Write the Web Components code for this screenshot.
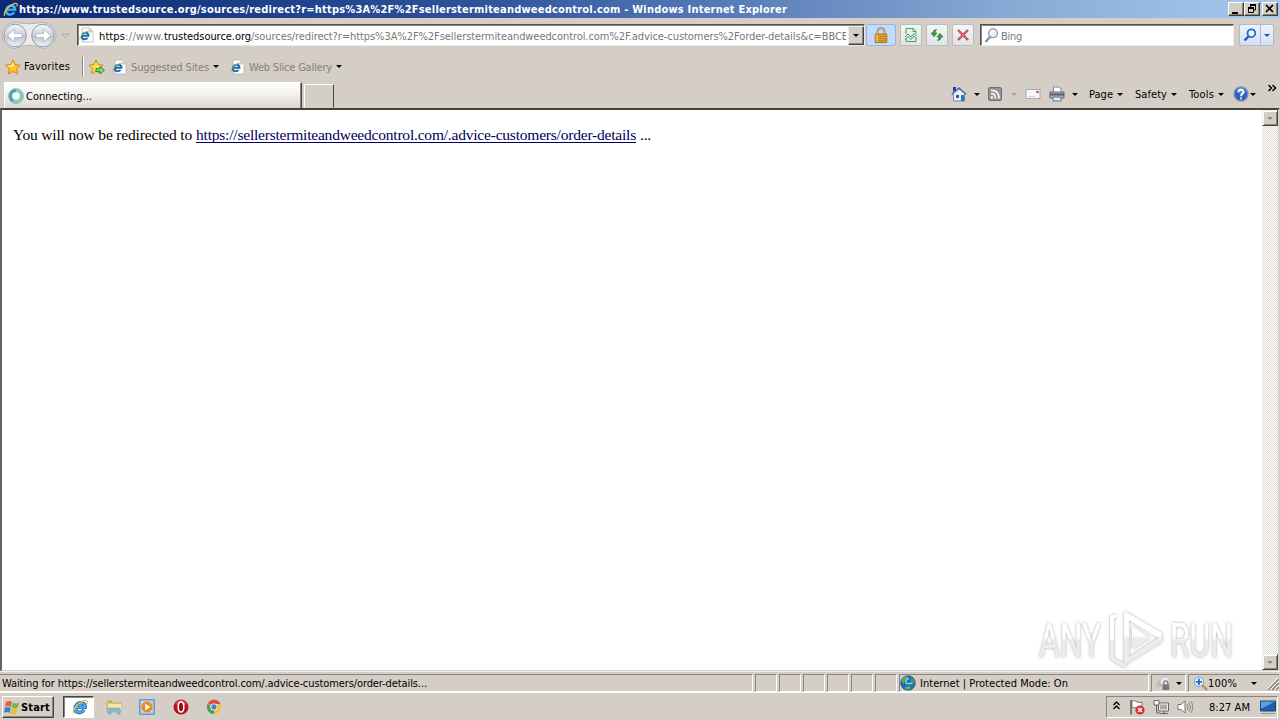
<!DOCTYPE html>
<html lang="en">
<head>
<meta charset="utf-8">
<title>Windows Internet Explorer</title>
<style>
    body {
        margin: 0;
        width: 1280px;
        height: 720px;
        overflow: hidden;
        font: 11px/14px "DejaVu Sans Condensed", "DejaVu Sans", sans-serif;
        color: #000;
        background: #d5cec7;
    }
</style>
</head>
<body>
<browser-window>
    <title-bar slot="title">https://www.trustedsource.org/sources/redirect?r=https%3A%2F%2Fsellerstermiteandweedcontrol.com - Windows Internet Explorer</title-bar>
    <address-row slot="address"></address-row>
    <favorites-bar slot="favorites"></favorites-bar>
    <tab-row slot="tabs"></tab-row>
    <page-view slot="page"></page-view>
    <status-bar slot="status"></status-bar>
</browser-window>
<task-bar></task-bar>

<script>
const ICONS = {
    ie: `<path d="M3 1h8l3 3v11H3z" fill="#fff" stroke="#aeb6bd" stroke-width=".8"/><path d="M11 1v3h3" fill="#e5e9ec" stroke="#aeb6bd" stroke-width=".7"/>
        <g transform="translate(-.5 2.2) skewX(-8) translate(1.5 0)"><path d="M8.8 8.7A3.3 3.3 0 1 1 9.4 6.5H3" fill="none" stroke="#176cb4" stroke-width="2"/></g><path d="M1 12.5C-.3 10 6 4.3 10.7 3.7c1.5 0 1.1 1.6.6 2.3" fill="none" stroke="#c9ac45" stroke-width="1"/>`,
    e: `<g transform="skewX(-8) translate(1 0)"><path d="M12.6 10.8A4.8 4.8 0 1 1 13.1 8.3H4" fill="none" stroke="#104a99" stroke-width="3.6"/><path d="M12.6 10.8A4.8 4.8 0 1 1 13.1 8.3H4" fill="none" stroke="#41b4ee" stroke-width="2.3"/></g>
        <path d="M2.2 14.6C-1.5 12.5 7.5 2.1 13.7 1.4c2.2-.1 1.8 2.3 1 3.4" fill="none" stroke="#edc240" stroke-width="1.3"/>`,
    star: `<path d="M8 .8l2.2 4.8 5.2.6-3.8 3.6 1 5.2L8 12.5 3.4 15l1-5.2L.6 6.2l5.2-.6z" fill="#ffc42c" stroke="#d58a12"/><path d="M8 3l1.5 3.5-3 2-3.8-1.8L6.3 6z" fill="#ffea8e"/>`,
    addstar: `<path d="M7 .8l2.1 4.7 5 .6-3.7 3.4 1 4.8L7 12l-4.4 2.5 1-5L.3 6.1l4.6-.6z" fill="#ffdb55" stroke="#cf8a17"/><path d="M7 9.7h4V7.5l4.5 3.7-4.5 3.7v-2.3H7z" fill="#7ddb70" stroke="#21822a" stroke-width=".9"/>`,
    lock: `<path d="M4.5 8V4.8a3.5 3.5 0 0 1 7 0V8" fill="none" stroke="#857553" stroke-width="2"/><path d="M4.5 8V4.8a3.5 3.5 0 0 1 7 0V8" fill="none" stroke="#e4d6aa" stroke-width=".8"/>
        <path d="M2.2 7h11.6v8.5H2.2z" fill="#e8a72b" stroke="#a9731b"/><path d="M3 9.4h10M3 11.6h10M3 13.7h10" stroke="#ba7d1c"/><path d="M4 7.7v7" stroke="#ffe07a"/>`,
    compat: `<path d="M3 7V1.5h7.2L13 4.3V7M3 11v3.5h10V11" fill="none" stroke="#50a057"/><path d="M10 1.5v3h3" fill="none" stroke="#50a057"/><path d="M2 10l3-3 3 3 3-3.5 3 3M2 12.5l3-3 3 3 3-3.5 3 3" fill="none" stroke="#329344" stroke-width=".9"/>`,
    refresh: `<path d="M7.5 2.5Q4.2 2.500 4 6H2l3 3.700L8 6H6Q6 4 7.500 2.500z" fill="#3c9c43" stroke="#257c30" stroke-width=".7"/><path d="M8.500 13.500Q12 13.500 12.200 10H14l-3-3.700L8 10h2Q10 12 8.500 13.500z" fill="#3c9c43" stroke="#257c30" stroke-width=".7"/>`,
    stop: `<path d="M3 3l10 10M13 3L3 13" stroke="#b94052" stroke-width="2.3"/><path d="M3.5 3.5l9 9M12.5 3.5l-9 9" stroke="#e8707a" stroke-width="1"/>`,
    glass: `<path d="M6.6 9.4L1.5 15" stroke="#7d8b9c" stroke-width="2.3"/><circle cx="9.6" cy="5.7" r="4.7" fill="#e3f1fb" stroke="#8998aa" stroke-width="1.3"/><path d="M7 5q1-2 3-2" stroke="#fff" stroke-width="1.4" fill="none"/>`,
    find: `<path d="M7 9L2.5 13.5" stroke="#2159bf" stroke-width="2.4"/><circle cx="9.4" cy="6.2" r="3.9" fill="#e8f5ff" stroke="#276ad0" stroke-width="1.8"/>`,
    home: `<path d="M2.5 7v8h11V7L8 3z" fill="#e8f0fc" stroke="#7189b5"/><path d="M.7 8.5L8 2l7.3 6.5" stroke="#5168a9" fill="none" stroke-width="1.4"/><path d="M2 1h3v3L2 6z" fill="#263da2"/><path d="M10 9h3v6h-3z" fill="#287cad"/><path d="M5 9h3v3H5z" fill="#46566e"/>`,
    rss: `<rect x="1.5" y="1.5" width="13" height="13" rx="1.5" fill="#949494" stroke="#727272"/><path d="M4 7.5q4.5 0 4.5 5M4 4.2q8 0 8 8.3" stroke="#fff" stroke-width="1.5" fill="none"/><circle cx="4.9" cy="11.5" r="1.2" fill="#fff"/>`,
    mail: `<path d="M1 3.5h14v9H1z" fill="#f7f7fa" stroke="#aaa8ad"/><path d="M11 5h3v2h-3z" fill="#d86a68"/><path d="M3 10.5h7" stroke="#cdd2de"/>`,
    print: `<path d="M4.5 6V1h5.7L12 3v3" fill="#fff" stroke="#7c8693"/><path d="M1 6h14v6H1z" fill="#b3b6ba" stroke="#646b72"/><path d="M1 8.5h14" stroke="#555d66" stroke-width="2"/><path d="M4 11h8v4H4z" fill="#b9e0f2" stroke="#6e7880"/><path d="M5 13h6" stroke="#fff"/>`,
    help: `<circle cx="8" cy="8" r="7" fill="#2e60c2" stroke="#8291b1" stroke-width="1.4"/><path d="M3 6q4-6 10 0-4 3-10 0" fill="#688fde"/><path d="M5.5 6q0-2.5 2.5-2.5T10.5 6q0 1.2-1.2 1.9T8 10.3M8 11.5v1.7" fill="none" stroke="#fff" stroke-width="1.8"/>`,
    spin: `<circle cx="8" cy="8" r="5.6" fill="#fff" stroke="#8fd3cb" stroke-width="3"/><path d="M8 2.4a5.6 5.6 0 0 0-3 10.3" fill="none" stroke="#4aaca2" stroke-width="3"/><circle cx="8" cy="8" r="7.2" fill="none" stroke="#4a9f98" stroke-width=".8"/><circle cx="8" cy="8" r="4.1" fill="none" stroke="#5fa9a3" stroke-width=".6"/>`,
    globe: `<circle cx="8" cy="8" r="7.3" fill="#2368bd" stroke="#254f83" stroke-width=".7"/><path d="M1.5 6q1-4 5-5l2 1-2 2 1 1-3 1-1 3zM5 12l3-1 3 1-1 2-4 1z" fill="#55b64b"/><path d="M11 2.500q3 1 3.700 5l-2 3-2-2z" fill="#3f9f62"/><path d="M6 8.500q-1-4 3-5M6 8.500h6" stroke="#8fd0ef" stroke-width="1.4" fill="none"/>`,
    secure: `<path d="M1 10q0-3 3-5l4-3 3 3-2 6-7 1z" fill="#bcbcbc"/><circle cx="10" cy="6.5" r="4.5" fill="#ececec" stroke="#c5c5c5"/><path d="M8.8 9.5V7.8a2 2 0 0 1 4 0v1.7" fill="none" stroke="#777" stroke-width="1.3"/><path d="M7.5 9.3h6.7V15H7.5z" fill="#777"/>`,
    zoom: `<path d="M9.5 9.5L15 15" stroke="#bd9152" stroke-width="2.6"/><circle cx="6.3" cy="6.3" r="5" fill="#eaf6ff" stroke="#8ba9c4" stroke-width="1.2"/><path d="M6.3 3v6.6M3 6.3h6.6" stroke="#2369ce" stroke-width="2"/>`,
    win: `<path d="M2 3q3-2 6 0L7 8Q4 6 1 8z" fill="#e6603a"/><path d="M9 3.4q3 2 6.2 0l-1.5 5q-3 2-5.7.2z" fill="#73b944"/><path d="M.8 9q3-2 6 0l-1.3 5q-2.7-1.7-5.4-.2z" fill="#3780d2"/><path d="M7.6 9.5q3 1.8 5.9.2l-1.4 5q-3 1.7-5.8-.2z" fill="#f2bc32"/>`,
    folder: `<path d="M1 2h5l1 2h8v9H1z" fill="#e9c862" stroke="#bfa458" stroke-width=".7"/><path d="M2 5h13v6H2z" fill="#f8e7a0"/><path d="M2 9h12v6h-3v-3H5v3H2z" fill="#80bbd9" stroke="#6caac9" stroke-width=".6"/><path d="M3 3h3" stroke="#5aab4d"/>`,
    media: `<path d="M.7.7h14.6v14.6H.7z" fill="#9ac8ea" stroke="#6289b2"/><path d="M2.5 2.5h11v11h-11z" fill="#c6e2f5"/><circle cx="8" cy="8" r="5.6" fill="#f28a17"/><path d="M6.2 4.7v6.6L11.4 8z" fill="#fff"/>`,
    opera: `<circle cx="8" cy="8" r="7.5" fill="#b9111c"/><path d="M2 5q6-8 12 0-5 3-12 0" fill="#d94b50"/><ellipse cx="8" cy="8" rx="2.8" ry="5" fill="#8f0f18" stroke="#fff" stroke-width="1.5"/>`,
    chrome: `<circle cx="8" cy="8" r="7" fill="#efc52d"/><path d="M8 8L2 4.3A7 7 0 0 1 14.5 5H8z" fill="#df4c3c"/><path d="M8 8v7A7 7 0 0 1 2 4.3L6 10z" fill="#3ca257"/><circle cx="8" cy="8" r="3.6" fill="#fff"/><circle cx="8" cy="8" r="2.7" fill="#427fde"/>`,
    flag: `<path d="M2 1v14.5" stroke="#777" stroke-width="2"/><path d="M3 2q3-1 5 1 3 1 5 0v7q-3 1-5-1-2-1-5 0z" fill="#fff" stroke="#777"/><circle cx="11" cy="11" r="4.6" fill="#d82d32"/><path d="M9 9l4 4M13 9l-4 4" stroke="#fff" stroke-width="1.5"/>`,
    net: `<path d="M5.5 4h10v8h-10z" fill="#aaa" stroke="#666"/><path d="M6.5 5h8v6h-8z" fill="none" stroke="#fff" stroke-width=".8"/><path d="M7 14.5h8M11 12v3" stroke="#666" stroke-width="1.2"/><path d="M1 1.5h5V6H1z" fill="#fff" stroke="#666"/><path d="M3.5 6v8H7" fill="none" stroke="#666"/>`,
    sound: `<path d="M1 5.5h3L8 2v12l-4-3.5H1z" fill="#fff" stroke="#777"/><path d="M10 5q2 3 0 6M12 3.5q3 4.5 0 9M14 2q3.5 6 0 12" fill="none" stroke="#8b8b8b"/>`,
    desk: `<path d="M.5 2h15v10H.5z" fill="#1b5fb2" stroke="#23466e"/><path d="M1 2.5h14L3 9H1z" fill="#5b9ee2"/><path d="M1 14.5h14" stroke="#8998aa"/>`
};

class UiIcon extends HTMLElement {
    constructor() {
        super();
        this.attachShadow({ mode: "open" });
    }

    connectedCallback() {
        const size = this.getAttribute("size") || 16;
        this.shadowRoot.innerHTML = `
            <style>
                :host { display: block; flex: none; width: ${size}px; height: ${size}px; }
                svg { display: block; }
            </style>
            <svg width="${size}" height="${size}" viewBox="0 0 16 16">${ICONS[this.getAttribute("name")]}</svg>
        `;
    }
}

// A run of text whose letter spacing is adjusted to fill the given width.
class FitText extends HTMLElement {
    constructor() {
        super();
        this.attachShadow({ mode: "open" }).innerHTML = `
            <style>
                :host { display: block; flex: none; }
                span { display: block; width: max-content; padding-top: var(--text-drop, 2px); white-space: pre; }
            </style>
            <span><slot></slot></span>
        `;
    }

    connectedCallback() {
        const width = Number(this.getAttribute("w"));
        this.style.width = width + "px";
        const span = this.shadowRoot.querySelector("span");
        const natural = span.getBoundingClientRect().width;
        const count = this.textContent.length;
        if (natural && count) {
            span.style.letterSpacing = (width - natural) / count + "px";
        }
    }
}

class DropArrow extends HTMLElement {
    constructor() {
        super();
        this.attachShadow({ mode: "open" }).innerHTML = `
            <style>
                :host { display: block; flex: none; width: 6px; height: 3px; }
                svg { display: block; }
            </style>
            <svg width="6" height="3" viewBox="0 0 6 3"><path d="M0 0h6L3 3z" fill="currentColor"/></svg>
        `;
    }
}

class BrowserWindow extends HTMLElement {
    constructor() {
        super();
        this.attachShadow({ mode: "open" }).innerHTML = `
            <style>
                :host { display: grid; height: 693px; grid-template-rows: 18px 34px 28px 28px 563px 22px; }
            </style>
            <slot name="title"></slot>
            <slot name="address"></slot>
            <slot name="favorites"></slot>
            <slot name="tabs"></slot>
            <slot name="page"></slot>
            <slot name="status"></slot>
        `;
    }
}

class TitleBar extends HTMLElement {
    constructor() {
        super();
        this.attachShadow({ mode: "open" });
    }

    connectedCallback() {
        this.shadowRoot.innerHTML = `
            <style>
                :host {
                    display: flex;
                    align-items: center;
                    background: linear-gradient(90deg, #0b2870, #1a3d88 18%, #2f549b 38%, #5579b6 56%, #86a8d4 78%, #a5caee);
                    box-sizing: border-box;
                    padding: 0 2px 0 3px;
                }
                fit-text { color: #fff; font-weight: bold; margin-left: 1px; }
                .buttons { display: flex; margin-left: auto; }
                .buttons span {
                    box-sizing: border-box;
                    width: 16px;
                    height: 14px;
                    background: #d5cec7;
                    border: 1px solid;
                    border-color: #fff #404040 #404040 #fff;
                    box-shadow: inset -1px -1px #888078;
                }
                .buttons span:last-child { margin-left: 2px; }
                svg { display: block; }
            </style>
            <ui-icon name="e" size="15"></ui-icon>
            <fit-text w="768">${this.textContent}</fit-text>
            <div class="buttons">
                <span><svg width="14" height="12"><path d="M3 9h6v2H3z"/></svg></span>
                <span><svg width="14" height="12"><path d="M5 2h6M5.5 2v2M10.5 2v5H9M3 5.5h6M3.5 5v4.5h5V5" fill="none" stroke="#000"/><path d="M5 1h6v2H5zM3 4h6v2H3z"/></svg></span>
                <span><svg width="14" height="12"><path d="M3 2l7 7M10 2L3 9" stroke="#000" stroke-width="1.7"/></svg></span>
            </div>
        `;
    }
}

class AddressRow extends HTMLElement {
    constructor() {
        super();
        this.attachShadow({ mode: "open" });
    }

    connectedCallback() {
        this.shadowRoot.innerHTML = `
            <style>
                :host { display: flex; align-items: flex-start; box-sizing: border-box; padding-top: 6px; }
                .nav { flex: none; margin-top: -3px; }
                .field {
                    display: flex;
                    align-items: center;
                    box-sizing: border-box;
                    height: 22px;
                    background: #fff;
                    border: 1px solid;
                    border-color: #55504b #eee9e3 #eee9e3 #55504b;
                    box-shadow: inset 1px 1px #8a857f;
                    color: #777;
                    --text-drop: 3px;
                }
                .url { width: 788px; margin-left: 5px; padding-left: 1px; }
                .url ui-icon { margin-right: 4px; }
                .clip { display: flex; width: 747px; overflow: hidden; }
                .dark { color: #000; }
                .drop {
                    display: grid;
                    place-items: center;
                    width: 16px;
                    height: 19px;
                    margin-left: auto;
                    box-sizing: border-box;
                    background: #d5cec7;
                    border: 1px solid;
                    border-color: #eee #444 #444 #eee;
                    box-shadow: inset -1px -1px #888;
                    color: #000;
                }
                .button {
                    display: grid;
                    place-items: center;
                    box-sizing: border-box;
                    width: 22px;
                    height: 22px;
                    margin-left: 4px;
                    border: 1px solid #b9bdbf;
                    border-radius: 2px;
                    background: linear-gradient(#f4f6f6, #dfe4e6);
                }
                .lock { width: 30px; margin-left: 1px; background: #c4dcfb; border-color: #8fb4e5; }
                .search { width: 254px; margin-left: 6px; padding-left: 3px; }
                .search fit-text { margin-left: 2px; }
                .find {
                    display: flex;
                    align-items: center;
                    box-sizing: border-box;
                    width: 35px;
                    height: 22px;
                    margin-left: 5px;
                    padding-left: 2px;
                    border: 1px solid #a9bbd0;
                    border-radius: 2px;
                    background: linear-gradient(#edf2f9, #d4e1f2);
                }
                .find i { width: 1px; height: 20px; margin: 0 3px 0 2px; background: #a9bbd0; }
                .find drop-arrow { color: #2456a8; }
            </style>
            <svg class="nav" width="72" height="30" viewBox="0 0 72 30">
                <defs>
                    <linearGradient id="orb" x2="0" y2="1">
                        <stop stop-color="#f3f6f9"/><stop offset=".48" stop-color="#cbd3dc"/>
                        <stop offset=".52" stop-color="#b8c2ce"/><stop offset="1" stop-color="#f1f7fb"/>
                    </linearGradient>
                </defs>
                <path d="M15 1.5Q29 4 43 1.5A12.5 12.5 0 0 1 43 27.5Q29 21 15 27.5A12.5 12.5 0 0 1 15 1.5z" fill="#eeeae7" stroke="#b5b2b2"/>
                <g fill="url(#orb)" stroke="#8e98a6"><circle cx="15" cy="14.5" r="11.3"/><circle cx="43" cy="14.5" r="11.3"/></g>
                <g fill="#fff" stroke="#9faab9" stroke-width=".7">
                    <path d="M7.5 14.5l7-6.5v4.5H22v4h-7.5V21z"/>
                    <path d="M50.5 14.5l-7-6.5v4.5H36v4h7.5V21z"/>
                </g>
                <path d="M62 13h7l-3.5 4z" fill="#d0cbc6" stroke="#aaa39d" stroke-width=".8"/>
            </svg>
            <div class="field url">
                <ui-icon name="ie"></ui-icon>
                <div class="clip">
                    <fit-text w="26" class="dark">https</fit-text>
                    <fit-text w="39">://www.</fit-text>
                    <fit-text w="87" class="dark">trustedsource.org</fit-text>
                    <fit-text w="597">/sources/redirect?r=https%3A%2F%2Fsellerstermiteandweedcontrol.com%2F.advice-customers%2Forder-details&amp;c=BBCE</fit-text>
                </div>
                <span class="drop"><drop-arrow></drop-arrow></span>
            </div>
            <div class="button lock"><ui-icon name="lock"></ui-icon></div>
            <div class="button"><ui-icon name="compat"></ui-icon></div>
            <div class="button"><ui-icon name="refresh"></ui-icon></div>
            <div class="button"><ui-icon name="stop"></ui-icon></div>
            <div class="field search"><ui-icon name="glass" size="15"></ui-icon><fit-text w="21">Bing</fit-text></div>
            <div class="find"><ui-icon name="find"></ui-icon><i></i><drop-arrow></drop-arrow></div>
        `;
    }
}

class FavoritesBar extends HTMLElement {
    constructor() {
        super();
        this.attachShadow({ mode: "open" });
    }

    connectedCallback() {
        this.shadowRoot.innerHTML = `
            <style>
                :host { display: flex; align-items: center; box-sizing: border-box; padding: 1px 0 0 5px; }
                .main { margin-left: 3px; --text-drop: 0px; }
                .sep { width: 1px; height: 20px; margin: 0 5px 0 12px; background: #8c8680; border-right: 1px solid #fff; }
                .link { color: #858079; margin: 0 4px 0 3px; }
                .first { margin-left: 7px; }
                .second { margin-left: 11px; }
            </style>
            <ui-icon name="star"></ui-icon>
            <fit-text class="main" w="46">Favorites</fit-text>
            <span class="sep"></span>
            <ui-icon name="addstar"></ui-icon>
            <ui-icon class="first" name="ie"></ui-icon>
            <fit-text class="link" w="78">Suggested Sites</fit-text>
            <drop-arrow></drop-arrow>
            <ui-icon class="second" name="ie"></ui-icon>
            <fit-text class="link" w="83">Web Slice Gallery</fit-text>
            <drop-arrow></drop-arrow>
        `;
    }
}

class TabRow extends HTMLElement {
    constructor() {
        super();
        this.attachShadow({ mode: "open" });
    }

    connectedCallback() {
        this.shadowRoot.innerHTML = `
            <style>
                :host { display: flex; align-items: flex-end; box-sizing: border-box; }
                .tab {
                    display: flex;
                    align-items: center;
                    gap: 2px;
                    box-sizing: border-box;
                    width: 298px;
                    height: 26px;
                    margin-left: 4px;
                    padding-left: 3px;
                    background: linear-gradient(#fff, #f1eeeb 50%, #dcd6d0);
                    border-top: 1px solid #fff;
                    border-left: 1px solid #fff;
                    border-right: 1px solid #444;
                    box-shadow: inset -1px 0 #8b857f;
                }
                .new {
                    box-sizing: border-box;
                    width: 30px;
                    height: 24px;
                    margin-left: 2px;
                    border: 1px solid;
                    border-color: #fff #444 transparent #fff;
                }
                .commands { display: flex; align-items: center; height: 28px; margin-left: 617px; }
                .more { align-self: flex-start; margin: 4px 0 0 12px; }
                .off { color: #aaa39c; }
            </style>
            <div class="tab"><ui-icon name="spin"></ui-icon><fit-text w="66">Connecting...</fit-text></div>
            <div class="new"></div>
            <div class="commands">
                <ui-icon name="home"></ui-icon><drop-arrow style="margin-left:7px"></drop-arrow>
                <ui-icon name="rss" style="margin-left:7px"></ui-icon><drop-arrow class="off" style="margin-left:8px"></drop-arrow>
                <ui-icon name="mail" style="margin-left:8px"></ui-icon>
                <ui-icon name="print" style="margin-left:8px"></ui-icon><drop-arrow style="margin-left:7px"></drop-arrow>
                <fit-text w="24" style="margin-left:11px">Page</fit-text><drop-arrow style="margin-left:4px"></drop-arrow>
                <fit-text w="32" style="margin-left:12px">Safety</fit-text><drop-arrow style="margin-left:4px"></drop-arrow>
                <fit-text w="25" style="margin-left:12px">Tools</fit-text><drop-arrow style="margin-left:4px"></drop-arrow>
                <ui-icon name="help" style="margin-left:9px"></ui-icon><drop-arrow style="margin-left:1px"></drop-arrow>
                <svg class="more" width="9" height="8"><path d="M.5 1l3 3-3 3M4.5 1l3 3-3 3" fill="none" stroke="#000" stroke-width="1.5"/></svg>
            </div>
        `;
    }
}

class ScrollBar extends HTMLElement {
    constructor() {
        super();
        this.attachShadow({ mode: "open" }).innerHTML = `
            <style>
                :host {
                    display: flex;
                    flex: none;
                    flex-direction: column;
                    justify-content: space-between;
                    width: 16px;
                    background: repeating-conic-gradient(#fff 0 25%, #dcd8d4 0 50%) 0 0 / 2px 2px;
                }
                span {
                    display: grid;
                    place-items: center;
                    box-sizing: border-box;
                    height: 16px;
                    background: #d5cec7;
                    border: 1px solid;
                    border-color: #eee #444 #444 #eee;
                    box-shadow: inset 1px 1px #fff, inset -1px -1px #8b857f;
                    color: #8c857e;
                }
                span:first-child drop-arrow { transform: rotate(180deg); }
            </style>
            <span><drop-arrow></drop-arrow></span>
            <span><drop-arrow></drop-arrow></span>
        `;
    }
}

class PageView extends HTMLElement {
    constructor() {
        super();
        this.attachShadow({ mode: "open" });
    }

    connectedCallback() {
        this.shadowRoot.innerHTML = `
            <style>
                :host {
                    display: flex;
                    position: relative;
                    box-sizing: border-box;
                    background: #fff;
                    border: solid;
                    border-width: 2px 2px 1px;
                    border-color: #45413d #d5cec7 #d5cec7 #66615c;
                }
                p {
                    display: flex;
                    flex: 1;
                    margin: 16px 0 0 11px;
                    font: 15.5px/18px "Liberation Serif", serif;
                    --text-drop: 0px;
                }
                a { color: #00005c; display: block; margin: 0 4px; height: 16px; border-bottom: 1px solid #00005c; }
                .mark { position: absolute; left: 1030px; top: 494px; }
            </style>
            <p><fit-text w="179">You will now be redirected to</fit-text><a><fit-text w="440">https://sellerstermiteandweedcontrol.com/.advice-customers/order-details</fit-text></a><fit-text w="11">...</fit-text></p>
            <scroll-bar></scroll-bar>
            <svg class="mark" width="210" height="66" viewBox="0 0 210 66">
                <defs><filter id="soft" x="-10%" y="-10%" width="120%" height="120%"><feDropShadow dx="0" dy="0" stdDeviation="1.7" flood-color="#777" flood-opacity=".65"/></filter>
                <linearGradient id="fade" x2="0" y2="1"><stop offset=".45" stop-color="#fff"/><stop offset=".5" stop-color="#ececec"/></linearGradient></defs>
                <g filter="url(#soft)" fill="url(#fade)" font-family="Roboto" font-size="48">
                    <text x="7" y="53" textLength="62" lengthAdjust="spacingAndGlyphs">ANY</text>
                    <text x="138" y="53" textLength="63" lengthAdjust="spacingAndGlyphs">RUN</text>
                    <path d="M92 7l38 22v9L92 61V7zm5 9v37l29-19zm3 6l18 12-18 11z" fill-rule="evenodd"/>
                    <path d="M85 10l-7 2v43l14 9 4-2-14-8V14l3-1z"/>
                </g>
            </svg>
        `;
    }
}

class StatusBar extends HTMLElement {
    constructor() {
        super();
        this.attachShadow({ mode: "open" });
    }

    connectedCallback() {
        this.shadowRoot.innerHTML = `
            <style>
                :host { display: flex; gap: 2px; box-sizing: border-box; padding-top: 2px; border-top: 1px solid #f1eeea; border-bottom: 1px solid #fff; }
                div {
                    display: flex;
                    align-items: center;
                    box-sizing: border-box;
                    height: 18px;
                    border: 1px solid;
                    border-color: #8b8580 #fff #fff #8b8580;
                }
                .message { width: 753px; border-left: 0; padding-left: 2px; }
                .pane { width: 22px; }
                .zone { width: 250px; padding-left: 0; gap: 4px; }
                .privacy { width: 35px; padding-left: 3px; gap: 5px; }
                .zoom { width: 91px; padding-left: 4px; border-right: 0; }
                .zoom drop-arrow { margin-left: 14px; }
                .zoom svg { margin-left: 9px; align-self: flex-end; }
            </style>
            <div class="message"><fit-text w="425">Waiting for https://sellerstermiteandweedcontrol.com/.advice-customers/order-details...</fit-text></div>
            ${`<div class="pane"></div>`.repeat(6)}
            <div class="zone"><ui-icon name="globe"></ui-icon><fit-text w="148">Internet | Protected Mode: On</fit-text></div>
            <div class="privacy"><ui-icon name="secure"></ui-icon><drop-arrow></drop-arrow></div>
            <div class="zoom">
                <ui-icon name="zoom" size="15"></ui-icon><fit-text w="29">100%</fit-text><drop-arrow></drop-arrow>
                <svg width="14" height="14"><path d="M2 13L13 2M6 13l7-7M10 13l3-3" stroke="#8b857f" stroke-width="1.5"/><path d="M1 12L12 1M5 12l8-8M9 12l4-4" stroke="#fff"/></svg>
            </div>
        `;
    }
}

class TaskBar extends HTMLElement {
    constructor() {
        super();
        this.attachShadow({ mode: "open" });
    }

    connectedCallback() {
        this.shadowRoot.innerHTML = `
            <style>
                :host { display: flex; align-items: flex-start; box-sizing: border-box; height: 27px; padding: 3px 2px 0; }
                .start {
                    display: flex;
                    align-items: center;
                    gap: 1px;
                    box-sizing: border-box;
                    width: 52px;
                    height: 22px;
                    padding-left: 1px;
                    border: 1px solid;
                    border-color: #fff #444 #444 #fff;
                    box-shadow: inset -1px -1px #8b857f;
                    font-weight: bold;
                }
                .apps { display: flex; align-items: center; gap: 17.5px; height: 22px; margin-left: 9px; }
                .active {
                    display: grid;
                    place-items: center;
                    box-sizing: border-box;
                    width: 31px;
                    height: 22px;
                    margin-right: -6px;
                    padding-left: 2px;
                    background: #fff;
                    border: 1px solid;
                    border-color: #444 #fff #fff #444;
                    box-shadow: inset 1px 1px #8b857f;
                }
                .tray {
                    display: flex;
                    align-items: center;
                    box-sizing: border-box;
                    width: 172px;
                    height: 22px;
                    margin-left: auto;
                    padding-left: 6px;
                    border: 1px solid;
                    border-color: #8b857f #fff #fff #8b857f;
                }
                .tray ui-icon + ui-icon { margin-left: 8px; }
                .up { margin: -3px 9px 0 0; }
                .tray fit-text { margin: 0 10px 0 16px; }
            </style>
            <div class="start"><ui-icon name="win"></ui-icon><fit-text w="29">Start</fit-text></div>
            <div class="apps">
                <span class="active"><ui-icon name="e"></ui-icon></span>
                <ui-icon name="folder"></ui-icon>
                <ui-icon name="media"></ui-icon>
                <ui-icon name="opera"></ui-icon>
                <ui-icon name="chrome"></ui-icon>
            </div>
            <div class="tray">
                <svg class="up" width="7" height="9"><path d="M.5 4l3-3 3 3M.5 8l3-3 3 3" fill="none" stroke="#000" stroke-width="1.3"/></svg>
                <ui-icon name="flag"></ui-icon>
                <ui-icon name="net"></ui-icon>
                <ui-icon name="sound"></ui-icon>
                <fit-text w="41">8:27 AM</fit-text>
                <ui-icon name="desk"></ui-icon>
            </div>
        `;
    }
}

customElements.define("ui-icon", UiIcon);
customElements.define("fit-text", FitText);
customElements.define("drop-arrow", DropArrow);
customElements.define("scroll-bar", ScrollBar);
customElements.define("browser-window", BrowserWindow);
customElements.define("title-bar", TitleBar);
customElements.define("address-row", AddressRow);
customElements.define("favorites-bar", FavoritesBar);
customElements.define("tab-row", TabRow);
customElements.define("page-view", PageView);
customElements.define("status-bar", StatusBar);
customElements.define("task-bar", TaskBar);
</script>
</body>
</html>
